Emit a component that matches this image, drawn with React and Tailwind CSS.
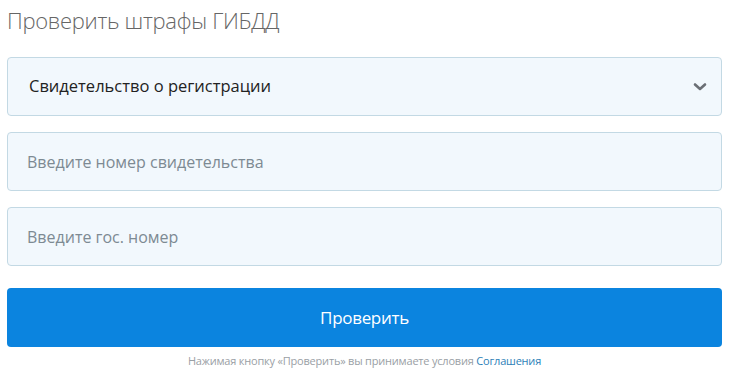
import { useState } from 'react';

const font = { fontFamily: '"Open Sans", "Noto Sans", sans-serif' };

export default function App() {
  const [docType, setDocType] = useState('sts');
  const [docNumber, setDocNumber] = useState('');
  const [plate, setPlate] = useState('');

  return (
    <div className="w-[737px] h-[375px] bg-white overflow-hidden" style={font}>
      <div className="w-[715px] ml-[7px] pt-[4px]">
        <h2 className="text-[22px] leading-[32px] font-light text-[#666] tracking-[-0.3px]">
          Проверить штрафы ГИБДД
        </h2>

        <div className="mt-[21px] flex flex-col gap-[16px]">
          {/* Select */}
          <div className="relative">
            <select
              value={docType}
              onChange={e => setDocType(e.target.value)}
              className="appearance-none w-full h-[59px] rounded-[4px] border border-[#c3d9e4] bg-[#f2f8fd] pl-[21px] pr-10 text-[16.5px] text-[#222] outline-none"
            >
              <option value="sts">Свидетельство о регистрации</option>
              <option value="vu">Водительское удостоверение</option>
            </select>
            <svg
              className="absolute right-[15px] top-1/2 -translate-y-1/2 pointer-events-none"
              width="14" height="10" viewBox="0 0 14 10"
            >
              <path d="M2 2.5 L7 7 L12 2.5" fill="none" stroke="#6b6f75" strokeWidth="2.6" strokeLinecap="round" strokeLinejoin="round" />
            </svg>
          </div>

          <input
            type="text"
            placeholder="Введите номер свидетельства"
            value={docNumber}
            onChange={e => setDocNumber(e.target.value)}
            className="w-full h-[59px] rounded-[4px] border border-[#c3d9e4] bg-[#f2f8fd] px-[19px] text-[16px] text-[#222] placeholder:text-[#7d8a93] outline-none"
          />

          <input
            type="text"
            placeholder="Введите гос. номер"
            value={plate}
            onChange={e => setPlate(e.target.value)}
            className="w-full h-[59px] rounded-[4px] border border-[#c3d9e4] bg-[#f2f8fd] px-[19px] text-[16px] text-[#222] placeholder:text-[#7d8a93] outline-none"
          />
        </div>

        <button className="mt-[22px] w-full h-[59px] rounded-[4px] bg-[#0b84df] text-white text-[17px] tracking-[-0.3px]">
          Проверить
        </button>

        <p className="mt-[6px] text-center text-[11px] text-[#9aa0a5] tracking-[-0.2px]">
          Нажимая кнопку «Проверить» вы принимаете условия{' '}
          <a href="#" className="text-[#2d7fb8]">Соглашения</a>
        </p>
      </div>
    </div>
  );
}
